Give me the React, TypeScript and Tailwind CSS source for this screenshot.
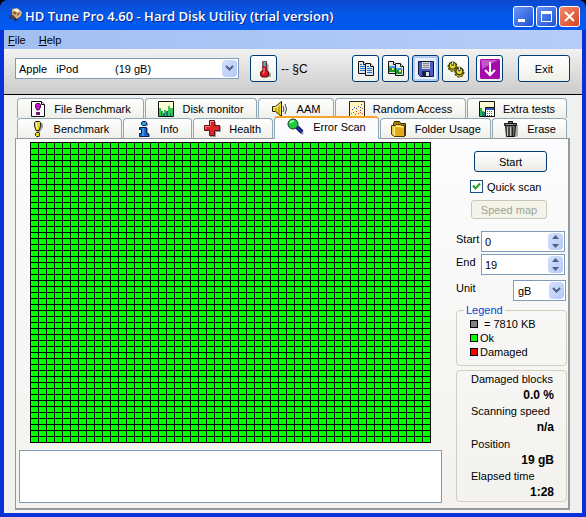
import { useState } from "react";
import type { ReactNode } from "react";
import clsx from "clsx";

function Icon({ children, size = 16 }: { children: ReactNode; size?: number }) {
  return (
    <svg width={size} height={size} viewBox="0 0 16 16" aria-hidden="true" className="shrink-0">
      {children}
    </svg>
  );
}

const DiskIcon = () => (
  <Icon>
    <path d="M2 10 9 4l6 3-1 2-5 5-2-1-1-2-3 1z" fill="#15234d" />
    <path d="M5 2 10 1l5 4-1 4-4 3-5-3z" fill="#d9b482" />
    <path d="M7 2l4 0 2 2-3 2-3-1z" fill="#fff0cf" />
    <path d="M5 6l3-2 2 2-2 2z" fill="#8a6541" />
    <path d="M2 8l4 0 3 3-2 2-4-2z" fill="#3d4350" />
    <path d="M10 6l3-1-1 3-2 1z" fill="#9c7040" />
  </Icon>
);

const ThermometerIcon = () => (
  <Icon size={18}>
    <path d="M11 3h1v7l2 2v3h-4z" fill="#9a9a9a" />
    <path d="M7 1.5h3V9l2 2v2.5L10.500 15h-4L5 13.500V11l2-2z" fill="#df1720" stroke="#5d1015" />
    <path d="M7.500 1.500h2v4h-2z" fill="#43c6d4" />
    <path d="M8 7v4l-1 1" stroke="#ff8a80" fill="none" />
  </Icon>
);

const Page = ({ x, y, picture }: { x: number; y: number; picture?: boolean }) => (
  <g transform={`translate(${x} ${y})`}>
    <path d="M1.500.5h5l3 3v9h-8z" fill="#dfe6ea" stroke="#101010" />
    <path d="M6.500.5v3h3" fill="#fff" stroke="#101010" />
    {picture ? (
      <>
        <path d="M2 5h6v6H2z" fill="#18982a" />
        <path d="M2 5h6v2H2z" fill="#3a9be0" />
        <path d="M5 7h2v2H5z" fill="#f0e03a" />
      </>
    ) : (
      <path d="M3 3.500h2M3 5.500h5M3 7.500h5M3 9.500h5" stroke="#1c78ce" />
    )}
  </g>
);

const CopyIcon = ({ picture }: { picture?: boolean }) => (
  <svg width="18" height="16" viewBox="0 0 18 16" aria-hidden="true" className="shrink-0">
    <Page x={0} y={0} picture={picture} />
    <Page x={7} y={2} picture={picture} />
  </svg>
);

const FloppyIcon = () => (
  <Icon size={16}>
    <path d="M.5.5h15v15h-13l-2-2z" fill="#4a5cc4" stroke="#11163f" />
    <path d="M4 1h8v7H4z" fill="#d2d2d2" />
    <path d="M5 2.500h6M5 4.500h6M5 6.500h6" stroke="#8a8a8a" />
    <path d="M4 10h8v5H4z" fill="#17204f" />
    <path d="M8 11h3v4H8z" fill="#e2e2e2" />
  </Icon>
);

const GearsIcon = () => (
  <Icon size={18}>
    <g stroke="#3d3806" strokeWidth="1">
      <circle cx="5" cy="6" r="4" fill="#c5b512" strokeDasharray="2 1" />
      <circle cx="5" cy="5" r="3" fill="#e6da32" />
      <circle cx="11" cy="11" r="4" fill="#c5b512" strokeDasharray="2 1" />
      <circle cx="11" cy="10" r="3" fill="#e6da32" />
      <path d="M5 1v4M11 6v4" stroke="#292929" strokeWidth="2" />
    </g>
    <path d="M5 1v3M11 6v3" stroke="#eee" />
  </Icon>
);

const DownIcon = () => (
  <svg width="20" height="20" viewBox="0 0 20 20" aria-hidden="true" className="shrink-0">
    <path d="M1 0h18l1 1v18l-1 1H1l-1-1V1z" fill="#a50aac" />
    <path d="M1 1h17L2 10z" fill="#c455c8" />
    <path d="M10 3v13M5 11l5 5 5-5" fill="none" stroke="#fff" strokeWidth="2" />
  </svg>
);

const BenchmarkIcon = () => (
  <Icon>
    <path d="M6 2h6l1 1v3l-3 5v5H7z" fill="#999" />
    <path d="M4.500 1.500 5.500.5h4l1 1v3.500L9 9.500H6L4.500 5z" fill="#e5d61b" stroke="#222" />
    <path d="M6.500 2v3l1 3" stroke="#fffdbb" fill="none" />
    <path d="M5.500 12.500l1-1h2l1 1v2l-1 1h-2l-1-1z" fill="#e5d61b" stroke="#222" />
  </Icon>
);

const FileBenchmarkIcon = () => (
  <Icon>
    <path d="M1.500.5h10l3 3v12h-13z" fill="#fff" stroke="#111" />
    <path d="M11.500.5v3h3" fill="#ddd" stroke="#111" />
    <path d="M5.500 4l1-1.500h3l1 1.500v2L9 9H7L5.500 6z" fill="#c510cb" stroke="#4b0b4e" />
    <path d="M6.500 11.500h3v2h-3z" fill="#c510cb" stroke="#4b0b4e" />
  </Icon>
);

const MonitorIcon = () => (
  <Icon>
    <path d="M.5.5h15v15H.5z" fill="#ffffd8" stroke="#111" />
    <path d="M1 7h2v3h2v5H1zM6 9h2v6H6zM10 5h2v2h3v8h-5z" fill="#35c554" />
    <path d="M3 10h1v5H3zM5 12h2v3H5zM8 10h2v5H8zM12 12h1v3h-1z" fill="#117870" />
  </Icon>
);

const SpeakerIcon = () => (
  <svg width="17" height="16" viewBox="0 0 17 16" aria-hidden="true" className="shrink-0">
    <path d="M.5 5.500h3L9.500.5v15l-6-5h-3z" fill="#f3d91c" stroke="#292405" />
    <path d="M4 5v6M7 3v10" stroke="#9b8109" />
    <path d="M1 6.500h3l4-3" stroke="#fffbc0" fill="none" />
    <path d="M11 5q2 3 0 6M13 3q3 5 0 10" fill="none" stroke="#444" />
  </svg>
);

const ScatterIcon = () => (
  <Icon>
    <path d="M.5.5h15v15H.5z" fill="#fff6bf" stroke="#222" />
    <path d="M3 8h1v1H3zM5 6h1v1H5zM7 7h1v1H7zM9 5h1v1H9zM11 6h1v1h-1zM12 3h1v1h-1zM11 9h1v1h-1z" fill="#264bc2" />
    <path d="M2 12h1v1H2zM4 11h1v1H4zM6 13h1v1H6zM7 10h1v1H7zM9 12h1v1H9zM11 11h1v1h-1zM13 12h1v1h-1zM13 7h1v1h-1z" fill="#df4330" />
  </Icon>
);

const ExtraIcon = () => (
  <Icon>
    <path d="M.5.5h15v15H.5z" fill="#fffbd5" stroke="#111" />
    <path d="M1 7h2v3h2v5H1z" fill="#24b64e" />
    <path d="M3 11h3v4H3z" fill="#147e72" />
    <path d="M6.500 6.500h9v9h-9z" fill="#fff" stroke="#111" />
    <path d="M7 7h8v2H7z" fill="#3158cb" />
    <path d="M8 10.500h6M8 12.500h6" stroke="#d52a4f" strokeDasharray="1 1" />
    <path d="M8 14.500h6" stroke="#283bc0" strokeDasharray="1 1" />
  </Icon>
);

const InfoIcon = () => (
  <Icon>
    <path d="M7 2h5v3H7zM7 7h5v6h2v3H6z" fill="#999" />
    <path d="M6.500.5h3l1 1v2l-1 1h-3l-1-1v-2z" fill="#2d9ce6" stroke="#061c50" />
    <path d="M3.500 6.500h7v6h2v3h-9v-3h2v-4h-2z" fill="#1268d4" stroke="#061c50" />
    <path d="M7 7v8" stroke="#58b7fa" />
  </Icon>
);

const HealthIcon = () => (
  <svg width="17" height="17" viewBox="0 0 17 17" aria-hidden="true" className="shrink-0">
    <path d="M6 2h6v4h5v6h-5v5H6z" fill="#999" />
    <path d="M5.500.5h5v5h5v5h-5v5h-5v-5h-5v-5h5z" fill="#dc252b" stroke="#5b1014" />
    <path d="M6.500 5V1.500H10M1.500 9V6.500H6" fill="none" stroke="#f68783" />
  </svg>
);

const ScanIcon = () => (
  <svg width="18" height="17" viewBox="0 0 18 17" aria-hidden="true" className="shrink-0">
    <path d="M11 9l6 6-2 2-6-6z" fill="#999" />
    <path d="M10 9l5 5" stroke="#09104e" strokeWidth="4" />
    <path d="M10 9l5 5" stroke="#1931c4" strokeWidth="2" />
    <circle cx="6" cy="6" r="5" fill="#22c943" stroke="#123c20" />
    <path d="M3 5q1-2 4-2" fill="none" stroke="#a6f7ae" strokeWidth="2" />
  </svg>
);

const FolderIcon = () => (
  <Icon>
    <path d="M2.500 14.500v-12l1-2h5l1 2h5v12z" fill="#aa7d0b" stroke="#3b2c05" />
    <path d="M.5 4.500h4l1-1h4l1 1h3v11H3.500l-3-2z" fill="#f4cc3e" stroke="#4c3905" />
    <path d="M4 6v9h9V7z" fill="#e1aa1a" />
    <path d="M3.500 15V6M5 5.500h7" stroke="#fff08e" />
  </Icon>
);

const TrashIcon = () => (
  <Icon>
    <path d="M13 4h2v11l-2 1H5z" fill="#aaa" />
    <path d="M1.500 2.500h12v2h-12zM5.500.5h4v2h-4zM2.500 4.500h10l-1 11h-8z" fill="#6b6b6b" stroke="#111" />
    <path d="M4.500 6v9M7.500 6v9" stroke="#c5c5c5" />
    <path d="M6 6v9M9.500 6v9" stroke="#222" />
    <path d="M3 3.500h7" stroke="#999" />
  </Icon>
);

type TabInfo = { name: string; width: string; icon: ReactNode };

const topTabs: TabInfo[] = [
  { name: "File Benchmark", width: "basis-[127px]", icon: <FileBenchmarkIcon /> },
  { name: "Disk monitor", width: "basis-[112px]", icon: <MonitorIcon /> },
  { name: "AAM", width: "basis-[76px]", icon: <SpeakerIcon /> },
  { name: "Random Access", width: "basis-[131px]", icon: <ScatterIcon /> },
  { name: "Extra tests", width: "basis-[100px]", icon: <ExtraIcon /> },
];

const bottomTabs: TabInfo[] = [
  { name: "Benchmark", width: "basis-[105px]", icon: <BenchmarkIcon /> },
  { name: "Info", width: "basis-[69px]", icon: <InfoIcon /> },
  { name: "Health", width: "basis-[80px]", icon: <HealthIcon /> },
  { name: "Error Scan", width: "basis-[106px]", icon: <ScanIcon /> },
  { name: "Folder Usage", width: "basis-[111px]", icon: <FolderIcon /> },
  { name: "Erase", width: "basis-[75px]", icon: <TrashIcon /> },
];

function TabRow({ tabs, active, onSelect }: { tabs: TabInfo[]; active: string; onSelect: (name: string) => void }) {
  return (
    <div role="tablist" className="flex h-5 gap-px pr-[3px] pl-0.5">
      {tabs.map((tab) => (
        <button
          key={tab.name}
          role="tab"
          aria-selected={tab.name === active}
          onClick={() => onSelect(tab.name)}
          className={clsx(
            "flex grow items-center justify-center gap-2 whitespace-nowrap rounded-t border border-b-0 border-[#91a7b4]",
            tab.width,
            tab.name === active
              ? "z-10 -mt-0.5 -mb-px h-[23px] border-t-2 border-t-[#f5a52e] bg-[#fcfcfe] pb-1"
              : "bg-linear-to-b from-white to-[#efefea]"
          )}
        >
          {tab.icon}
          {tab.name}
        </button>
      ))}
    </div>
  );
}

function ToolButton({ label, active, children }: { label: string; active?: boolean; children: ReactNode }) {
  return (
    <button
      aria-label={label}
      className={clsx(
        "flex h-[27px] w-[27px] items-center justify-center rounded-[3px] border border-[#003c74]",
        active ? "bg-[#e6eefc] ring-2 ring-inset ring-[#b5cdf5]" : "bg-linear-to-b from-white to-[#f0f0ea]"
      )}
    >
      {children}
    </button>
  );
}

function SelectArrow() {
  return (
    <span className="pointer-events-none absolute top-0.5 right-0.5 bottom-0.5 flex w-[15px] items-center justify-center rounded-sm bg-linear-to-br from-[#d5e1fd] to-[#b4c8f6]">
      <svg width="9" height="7" viewBox="0 0 9 7" aria-hidden="true">
        <path d="M1 1l3.500 3.500L8 1" fill="none" stroke="#4d6185" strokeWidth="2" />
      </svg>
    </span>
  );
}

function Spinner({ id, label, initial }: { id: string; label: string; initial: number }) {
  const [value, setValue] = useState(initial);
  return (
    <div className="flex h-[21px]">
      <label htmlFor={id} className="w-[25px]">{label}</label>
      <div className="flex min-w-0 flex-1 border border-[#7f9db9] bg-white p-px">
        <input
          id={id}
          value={value}
          onChange={(e) => setValue(Number(e.target.value) || 0)}
          className="w-full min-w-0 flex-1 px-0.5 outline-none"
        />
        <div className="flex w-[15px] flex-col rounded-sm bg-linear-to-br from-[#d5e1fd] to-[#b4c8f6]">
          <button aria-label={`${label} up`} onClick={() => setValue(value + 1)} className="flex flex-1 items-center justify-center">
            <svg width="7" height="4" viewBox="0 0 7 4"><path d="M0 4l3.500-4L7 4z" fill="#4d6185" /></svg>
          </button>
          <button aria-label={`${label} down`} onClick={() => setValue(value - 1)} className="flex flex-1 items-center justify-center">
            <svg width="7" height="4" viewBox="0 0 7 4"><path d="M0 0l3.500 4L7 0z" fill="#4d6185" /></svg>
          </button>
        </div>
      </div>
    </div>
  );
}

function BlockMap() {
  return (
    <svg viewBox="0 0 401 301" shapeRendering="crispEdges" role="img" aria-label="Scanned blocks" className="w-[401px] max-w-full">
      <defs>
        <pattern id="block" width="8" height="6" patternUnits="userSpaceOnUse">
          <rect width="8" height="6" fill="#000" />
          <rect x="1" y="1" width="7" height="5" fill="#00ff00" />
        </pattern>
      </defs>
      <rect width="401" height="301" fill="url(#block)" />
      <path d="M400.500 0v300.500H0" fill="none" stroke="#000" />
    </svg>
  );
}

const legend = [
  { color: "bg-[#808080]", text: "= 7810 KB", gap: "gap-1.5" },
  { color: "bg-[#00ff00]", text: "Ok", gap: "gap-0.5" },
  { color: "bg-[#ff0000]", text: "Damaged", gap: "gap-0.5" },
];

const stats = [
  { label: "Damaged blocks", value: "0.0 %" },
  { label: "Scanning speed", value: "n/a" },
  { label: "Position", value: "19 gB" },
  { label: "Elapsed time", value: "1:28" },
];

function ScanPanel() {
  const [quick, setQuick] = useState(true);
  return (
    <aside className="flex w-[111px] shrink-0 flex-col">
      <button className="mt-3 mr-5 ml-[18px] h-[21px] rounded-[3px] border border-[#003c74] bg-linear-to-b from-white to-[#ecebe6]">
        Start
      </button>
      <label className="mt-2 ml-[14px] flex h-[13px] items-center gap-1 whitespace-nowrap">
        <span className="relative flex">
          <input
            type="checkbox"
            checked={quick}
            onChange={(e) => setQuick(e.target.checked)}
            className="h-[13px] w-[13px] appearance-none border border-[#1c5180] bg-white"
          />
          {quick && (
            <svg width="13" height="13" viewBox="0 0 13 13" className="pointer-events-none absolute inset-0" aria-hidden="true">
              <path d="M3 5.500l2.500 3L10 3.500" fill="none" stroke="#21a121" strokeWidth="2" />
            </svg>
          )}
        </span>
        Quick scan
      </label>
      <button disabled className="mt-[7px] mr-5 ml-[15px] h-[19px] rounded-[3px] border border-[#c9c7ba] bg-[#f5f4ea] text-[#a1a192]">
        Speed map
      </button>
      <div className="mt-3 mr-0.5 flex flex-col gap-0.5">
        <Spinner id="start" label="Start" initial={0} />
        <Spinner id="end" label="End" initial={19} />
      </div>
      <div className="mt-[5px] mr-px flex h-[21px] justify-between">
        <label htmlFor="unit">Unit</label>
        <span className="relative w-[53px]">
          <select id="unit" className="h-full w-full appearance-none border border-[#7f9db9] bg-white pl-1">
            <option>gB</option>
            <option>mB</option>
          </select>
          <SelectArrow />
        </span>
      </div>
      <fieldset className="mt-0.5 h-[63px] rounded border border-[#d0d0bf] pl-[13px]">
        <legend className="-ml-[6px] px-0.5 leading-[14px] text-[#0046d5]">Legend</legend>
        {legend.map((row) => (
          <div key={row.text} className={clsx("flex h-[14px] items-center whitespace-nowrap", row.gap)}>
            <span className={clsx("h-2 w-2 border border-black", row.color)} />
            {row.text}
          </div>
        ))}
      </fieldset>
      <dl className="mt-1 flex flex-1 flex-col justify-between rounded border border-[#d0d0bf] pr-3 pb-px pl-[14px]">
        {stats.map((row) => (
          <div key={row.label}>
            <dt className="leading-4 whitespace-nowrap">{row.label}</dt>
            <dd className="text-right text-xs leading-4 font-bold">{row.value}</dd>
          </div>
        ))}
      </dl>
    </aside>
  );
}

export default function App() {
  const [tab, setTab] = useState("Error Scan");

  return (
    <div className="min-h-screen bg-black">
      <div className="flex min-h-screen flex-col overflow-hidden rounded-t-lg bg-[#0831d9] font-['Liberation_Sans',Arial,sans-serif] text-[11px] leading-4 text-black">
        <header className="flex h-[30px] items-center bg-linear-to-b from-[#0b48cd] via-[#0459e8] to-[#0158f2] pr-1.5 pl-[7px]">
          <DiskIcon />
          <h1 className="ml-0.5 flex-1 whitespace-nowrap pt-0.5 font-['Open_Sans',sans-serif] text-[13px] font-semibold text-white [text-shadow:1px_1px_#0f1f8a]">
            HD Tune Pro 4.60 - Hard Disk Utility (trial version)
          </h1>
          <div className="flex gap-0.5 pt-0.5">
            <button aria-label="Minimize" className="h-[21px] w-[21px] rounded-[3px] border border-white bg-linear-to-br from-[#6893f4] to-[#1f4fd8]">
              <svg viewBox="0 0 19 19"><path d="M4 12h7v3H4z" fill="#fff" /></svg>
            </button>
            <button aria-label="Maximize" className="h-[21px] w-[21px] rounded-[3px] border border-white bg-linear-to-br from-[#6893f4] to-[#1f4fd8]">
              <svg viewBox="0 0 19 19"><path d="M4.500 5.500h10v9h-10zM4 5h11" fill="none" stroke="#fff" /><path d="M4 4h11v3H4z" fill="#fff" /></svg>
            </button>
            <button aria-label="Close" className="h-[21px] w-[21px] rounded-[3px] border border-white bg-linear-to-br from-[#f08b6b] to-[#d8401d]">
              <svg viewBox="0 0 19 19"><path d="M5 5l9 9M14 5l-9 9" stroke="#fff" strokeWidth="2" /></svg>
            </button>
          </div>
        </header>

        <div className="mx-1 mb-1 flex flex-1 flex-col bg-[#ece9d8]">
          <nav className="flex h-[19px] items-center gap-[13px] bg-linear-to-r from-[#a2bff2] to-[#b5cdf8] pl-1">
            <button><u>F</u>ile</button>
            <button><u>H</u>elp</button>
          </nav>

          <div className="flex h-[46px] items-center border-b border-black bg-linear-to-b from-[#f2f2f2] to-[#cbcbcb] pr-3 pb-1.5 pl-[11px]">
            <span className="relative h-[21px] w-[224px]">
              <select aria-label="Drive" className="h-full w-full appearance-none border border-[#7f9db9] bg-white pl-[3px]">
                <option>{"Apple\u00a0\u00a0\u00a0iPod" + "\u00a0".repeat(12) + "(19 gB)"}</option>
              </select>
              <SelectArrow />
            </span>
            <div className="ml-[11px] flex flex-1 items-center gap-1">
              <ToolButton label="Temperature"><ThermometerIcon /></ToolButton>
              <span className="text-xs">-- §C</span>
            </div>
            <div className="flex gap-[3px]">
              <ToolButton label="Copy text"><CopyIcon /></ToolButton>
              <ToolButton label="Copy screenshot"><CopyIcon picture /></ToolButton>
              <ToolButton label="Save" active><FloppyIcon /></ToolButton>
              <ToolButton label="Options"><GearsIcon /></ToolButton>
            </div>
            <div className="ml-[7px] flex gap-[15px]">
              <ToolButton label="Minimize to tray"><DownIcon /></ToolButton>
              <button className="h-[27px] w-[52px] rounded-[3px] border border-[#003c74] bg-linear-to-b from-white to-[#f0f0ea]">
                Exit
              </button>
            </div>
          </div>

          <main className="flex flex-1 flex-col bg-[#f0f0f0] pt-[3px] pr-3 pb-[3px] pl-[11px]">
            <TabRow tabs={topTabs} active={tab} onSelect={setTab} />
            <TabRow tabs={bottomTabs} active={tab} onSelect={setTab} />
            <div role="tabpanel" aria-label={tab} className="flex flex-1 justify-between border border-r-2 border-b-2 border-[#919b9c] bg-linear-to-b from-[#fcfcfe] to-[#f3f2ee]">
              <div className="flex min-w-0 flex-1 flex-col pt-[3px] pr-[14px] pb-[5px] pl-[3px]">
                <div className="pl-[11px]"><BlockMap /></div>
                <textarea readOnly aria-label="Log" className="mt-[7px] block w-full flex-1 resize-none border border-[#7f9db9] bg-white" />
              </div>
              <div className="flex pr-px pb-[6px]">
                <ScanPanel />
              </div>
            </div>
          </main>
        </div>
      </div>
    </div>
  );
}
